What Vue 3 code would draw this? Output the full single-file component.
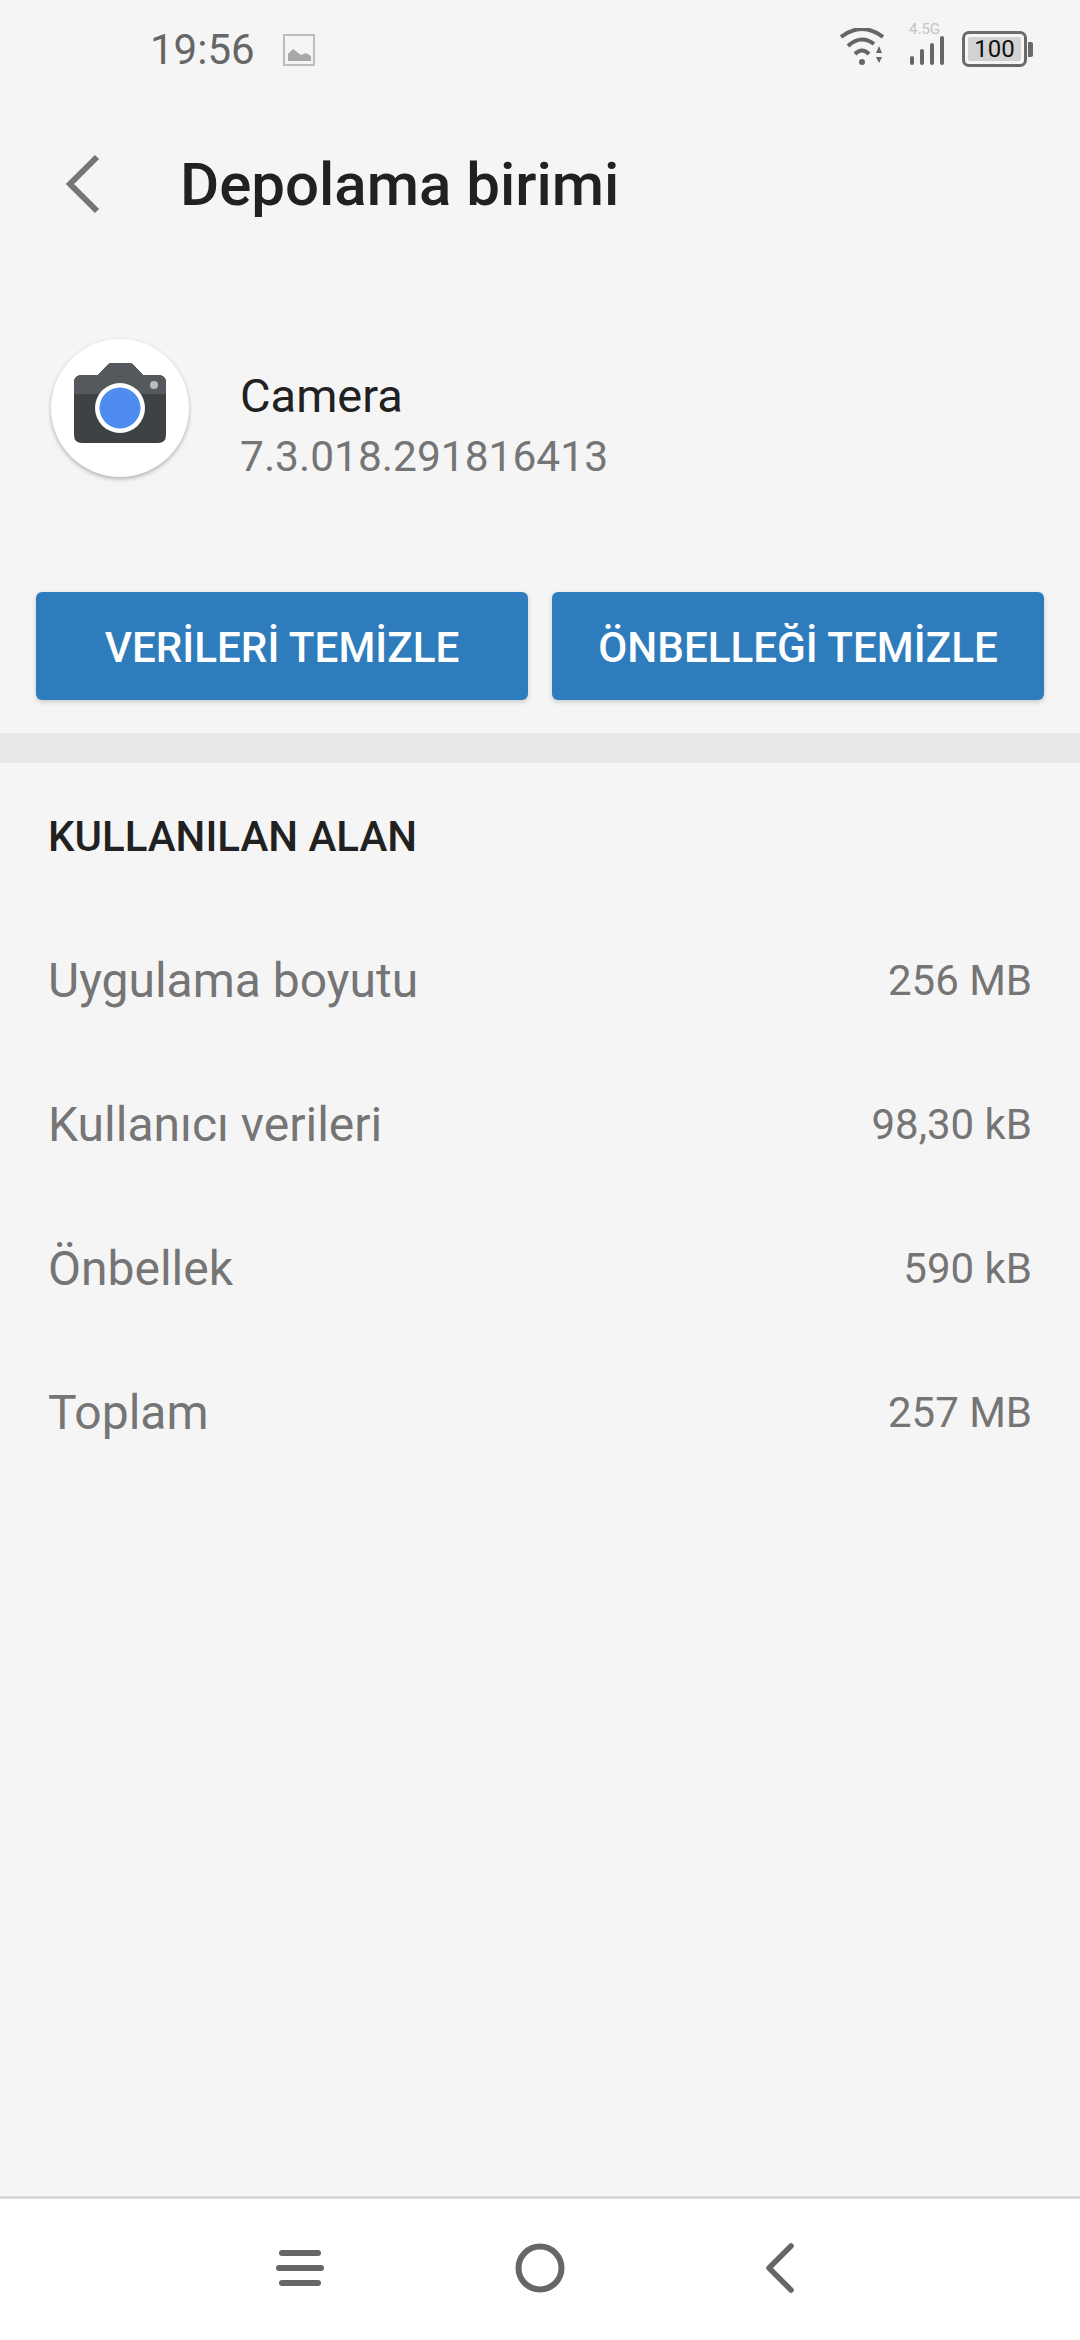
<script setup>
const rows = [
  { label: 'Uygulama boyutu', value: '256 MB' },
  { label: 'Kullanıcı verileri', value: '98,30 kB' },
  { label: 'Önbellek', value: '590 kB' },
  { label: 'Toplam', value: '257 MB' }
]
</script>

<template>
  <div class="screen">
    <div class="status">
      <div class="status-left">
        <span class="time">19:56</span>
        <svg class="pic" width="32" height="32" viewBox="0 0 32 32">
          <rect x="1" y="1" width="30" height="30" fill="none" stroke="#bdbdbd" stroke-width="2" />
          <path d="M5 20 L10 15 L14 18 L18 21 L23 19 L28 22 V27 H5 Z" fill="#a8a8a8" />
        </svg>
      </div>
      <div class="status-right">
        <svg width="44" height="37" viewBox="0 0 44 37">
          <path d="M1 9 Q22 -7 43 9" fill="none" stroke="#666" stroke-width="4" />
          <path d="M8 18 Q21 6 34 16" fill="none" stroke="#666" stroke-width="4" />
          <path d="M15 26 Q22 19 29 26" fill="none" stroke="#666" stroke-width="4" />
          <circle cx="22" cy="34" r="3" fill="#666" />
          <path d="M39 18 L42 25 H36 Z M36 29 H42 L39 35 Z" fill="#666" />
        </svg>
        <div class="signal">
          <span class="net">4.5G</span>
          <svg width="34" height="29" viewBox="0 0 34 29">
            <g fill="none" stroke="#666" stroke-width="4" stroke-linecap="round">
              <path d="M2 22 V27" />
              <path d="M12 15 V27" />
              <path d="M22 9 V27" />
              <path d="M32 2 V27" />
            </g>
          </svg>
        </div>
        <div class="battery">
          <div class="cell"><span class="level">100</span></div>
          <span class="nub"></span>
        </div>
      </div>
    </div>

    <div class="header">
      <svg class="back" width="36" height="60" viewBox="0 0 36 60">
        <path d="M33 3 L6 30 L33 57" fill="none" stroke="#757575" stroke-width="6" />
      </svg>
      <h1 class="title">Depolama birimi</h1>
    </div>

    <div class="app">
      <div class="app-icon">
        <svg class="camera" width="92" height="80" viewBox="0 0 92 80">
          <path d="M8 12 H24 L34 1.500 Q35 0 37 0 H56 Q58 0 59 1.500 L69 12 H84 Q92 12 92 20 V72 Q92 80 84 80 H8 Q0 80 0 72 V20 Q0 12 8 12 Z" fill="#3f4245" />
          <path d="M8 12 H24 L34 1.500 Q35 0 37 0 H56 Q58 0 59 1.500 L69 12 H84 Q92 12 92 20 V31 H0 V20 Q0 12 8 12 Z" fill="#55585c" />
          <circle cx="80" cy="22" r="4" fill="#bdbdbd" />
          <circle cx="46" cy="45" r="25" fill="#ffffff" />
          <circle cx="46" cy="45" r="20.500" fill="#4f8cf0" />
        </svg>
      </div>
      <div class="app-text">
        <div class="app-name">Camera</div>
        <div class="app-version">7.3.018.291816413</div>
      </div>
    </div>

    <div class="actions">
      <button class="action">VERİLERİ TEMİZLE</button>
      <button class="action">ÖNBELLEĞİ TEMİZLE</button>
    </div>

    <div class="divider"></div>

    <div class="section-title">KULLANILAN ALAN</div>

    <div class="rows">
      <div v-for="row in rows" :key="row.label" class="row">
        <span class="row-label">{{ row.label }}</span>
        <span class="row-value">{{ row.value }}</span>
      </div>
    </div>

    <div class="nav">
      <div class="nav-item">
        <svg width="48" height="36" viewBox="0 0 48 36">
          <g stroke="#666" stroke-width="6" stroke-linecap="round">
            <path d="M6 3 H42" />
            <path d="M3 18 H45" />
            <path d="M6 33 H42" />
          </g>
        </svg>
      </div>
      <div class="nav-item">
        <svg width="50" height="50" viewBox="0 0 50 50">
          <circle cx="25" cy="25" r="21.500" fill="none" stroke="#666" stroke-width="6" />
        </svg>
      </div>
      <div class="nav-item">
        <svg width="28" height="50" viewBox="0 0 28 50">
          <path d="M25 3 L3 25 L25 47" fill="none" stroke="#666" stroke-width="5.500" stroke-linecap="round" stroke-linejoin="round" />
        </svg>
      </div>
    </div>
  </div>
</template>

<style scoped>
.screen {
  width: 1080px;
  height: 2340px;
  background: #f5f5f5;
  display: flex;
  flex-direction: column;
  font-family: Roboto, "Noto Sans", sans-serif;
  overflow: hidden;
}
.status {
  height: 100px;
  display: flex;
  justify-content: space-between;
  align-items: flex-start;
  padding: 0 48px 0 150px;
  flex: none;
}
.status-left {
  display: flex;
  align-items: center;
  gap: 28px;
  margin-top: 25px;
}
.time {
  font-size: 42px;
  color: #666;
  line-height: 50px;
}
.status-right {
  display: flex;
  align-items: flex-end;
  margin-top: 22px;
  margin-right: -1px;
}
.signal {
  position: relative;
  width: 34px;
  height: 43px;
  margin-left: 26px;
  display: flex;
  align-items: flex-end;
}
.net {
  position: absolute;
  top: 0;
  left: -1px;
  font-size: 15px;
  color: #c4c4c4;
  line-height: 14px;
}
.battery {
  display: flex;
  align-items: center;
  margin-left: 18px;
  margin-bottom: -2px;
}
.cell {
  width: 65px;
  height: 36px;
  border: 3px solid #6a6a6a;
  border-radius: 7px;
  padding: 3px;
  box-sizing: border-box;
  display: flex;
}
.level {
  flex: 1;
  background: #d2d2d2;
  border-radius: 2px;
  font-size: 24px;
  line-height: 24px;
  text-align: center;
  color: #111;
}
.nub {
  width: 5px;
  height: 15px;
  background: #6a6a6a;
  margin-left: 1px;
  border-radius: 0 2px 2px 0;
}
.header {
  height: 168px;
  display: flex;
  align-items: center;
  padding-left: 64px;
  flex: none;
}
.back {
  flex: none;
}
.title {
  margin: 0 0 0 80px;
  font-size: 60px;
  font-weight: 500;
  color: #212121;
}
.app {
  display: flex;
  align-items: center;
  margin-top: 71px;
  padding-left: 51px;
  height: 138px;
  flex: none;
}
.app-icon {
  width: 138px;
  height: 138px;
  border-radius: 50%;
  background: #fff;
  box-shadow: 0 2px 4px rgba(0, 0, 0, 0.28);
  display: flex;
  align-items: center;
  justify-content: center;
  flex: none;
}
.camera {
  margin-bottom: 10px;
}
.app-text {
  margin-left: 51px;
  padding-top: 37px;
}
.app-name {
  font-size: 47px;
  line-height: 60px;
  color: #212121;
}
.app-version {
  font-size: 42.500px;
  line-height: 61px;
  color: #757575;
}
.actions {
  display: flex;
  gap: 24px;
  padding: 0 36px;
  margin-top: 115px;
  flex: none;
}
.action {
  flex: 1;
  height: 108px;
  border: none;
  padding: 2px 0 0;
  border-radius: 6px;
  background: #2e7cbb;
  color: #fff;
  font-family: inherit;
  font-size: 42.200px;
  font-weight: 500;
  box-shadow: 0 2px 5px rgba(0, 0, 0, 0.18);
}
.divider {
  height: 30px;
  margin-top: 33px;
  background: #e8e8e8;
  flex: none;
}
.section-title {
  margin-top: 49px;
  padding-left: 48px;
  font-size: 42px;
  line-height: 50px;
  font-weight: 500;
  color: #212121;
  flex: none;
}
.rows {
  margin-top: 46px;
  padding: 0 48px;
  flex: 1;
}
.row {
  height: 144px;
  display: flex;
  align-items: center;
  justify-content: space-between;
}
.row-label {
  font-size: 48px;
  color: #757575;
}
.row-value {
  font-size: 42px;
  color: #757575;
}
.nav {
  height: 144px;
  padding-bottom: 3px;
  border-top: 3px solid #d8d8d8;
  background: #fff;
  display: flex;
  align-items: center;
  justify-content: center;
  flex: none;
  box-sizing: border-box;
}
.nav-item {
  width: 240px;
  display: flex;
  justify-content: center;
}
</style>
